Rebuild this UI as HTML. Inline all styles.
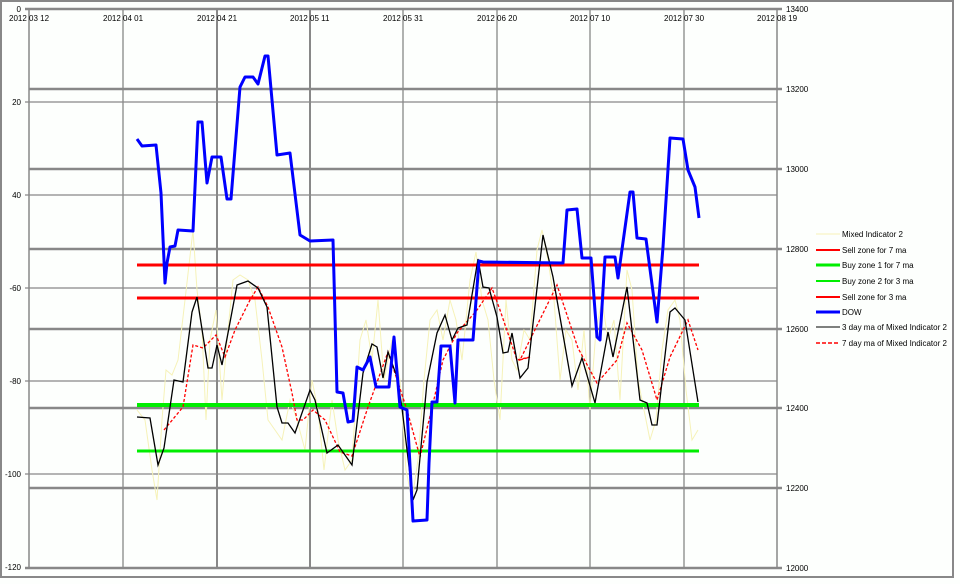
<!DOCTYPE html>
<html><head><meta charset="utf-8"><style>
html,body{margin:0;padding:0;background:#fff;}
svg{display:block;font-family:"Liberation Sans",sans-serif;}
</style></head><body>
<svg width="960" height="584" viewBox="0 0 960 584" xmlns="http://www.w3.org/2000/svg">
<rect x="0" y="0" width="960" height="584" fill="#fdfffd"/>
<rect x="1" y="1" width="952" height="576" fill="none" stroke="#888" stroke-width="2"/>
<!-- thin horizontal grid -->
<g stroke="#888" stroke-width="1.3">
<line x1="25" y1="102" x2="777" y2="102"/>
<line x1="25" y1="195" x2="777" y2="195"/>
<line x1="25" y1="288" x2="777" y2="288"/>
<line x1="25" y1="381" x2="777" y2="381"/>
<line x1="25" y1="474" x2="777" y2="474"/>
</g>
<!-- thick horizontal grid -->
<g stroke="#888" stroke-width="2.5">
<line x1="25" y1="9" x2="782" y2="9"/>
<line x1="29" y1="89" x2="782" y2="89"/>
<line x1="29" y1="169" x2="782" y2="169"/>
<line x1="29" y1="249" x2="782" y2="249"/>
<line x1="29" y1="329" x2="782" y2="329"/>
<line x1="29" y1="408" x2="782" y2="408"/>
<line x1="29" y1="488" x2="782" y2="488"/>
<line x1="25" y1="568" x2="782" y2="568"/>
</g>
<!-- vertical grid -->
<g stroke="#888">
<line x1="29" y1="9" x2="29" y2="568" stroke-width="1.5"/>
<line x1="123" y1="9" x2="123" y2="568" stroke-width="1.3"/>
<line x1="217" y1="9" x2="217" y2="568" stroke-width="2"/>
<line x1="310" y1="9" x2="310" y2="568" stroke-width="2"/>
<line x1="403" y1="9" x2="403" y2="568" stroke-width="1.3"/>
<line x1="497" y1="9" x2="497" y2="568" stroke-width="1.3"/>
<line x1="590" y1="9" x2="590" y2="568" stroke-width="1.3"/>
<line x1="684" y1="9" x2="684" y2="568" stroke-width="1.3"/>
<line x1="777" y1="9" x2="777" y2="568" stroke-width="1.5"/>
</g>
<!-- date labels -->
<g font-size="8" fill="#000">
<text x="9" y="21">2012 03 12</text>
<text x="103" y="21">2012 04 01</text>
<text x="197" y="21">2012 04 21</text>
<text x="290" y="21">2012 05 11</text>
<text x="383" y="21">2012 05 31</text>
<text x="477" y="21">2012 06 20</text>
<text x="570" y="21">2012 07 10</text>
<text x="664" y="21">2012 07 30</text>
<text x="757" y="21">2012 08 19</text>
</g>
<!-- left labels -->
<g font-size="8" fill="#000" text-anchor="end">
<text x="21" y="12">0</text>
<text x="21" y="105">20</text>
<text x="21" y="198">40</text>
<text x="21" y="291">-60</text>
<text x="21" y="384">-80</text>
<text x="21" y="477">-100</text>
<text x="21" y="570">-120</text>
</g>
<!-- right labels -->
<g font-size="8" fill="#000">
<text x="786" y="12">13400</text>
<text x="786" y="92">13200</text>
<text x="786" y="172">13000</text>
<text x="786" y="252">12800</text>
<text x="786" y="332">12600</text>
<text x="786" y="411">12400</text>
<text x="786" y="491">12200</text>
<text x="786" y="571">12000</text>
</g>
<!-- mixed indicator faint -->
<polyline fill="none" stroke="#f6f2b8" stroke-width="1" points="137,410 145,420 152,470 157,500 162,420 166,370 172,375 178,360 185,300 193,230 197,290 202,330 206,420 210,340 216,310 222,400 228,330 233,280 240,275 248,280 255,300 262,360 268,420 275,430 282,440 290,400 297,420 305,450 312,380 318,410 324,470 332,400 338,440 345,470 352,460 360,340 366,320 372,360 378,300 384,380 392,340 400,380 406,470 412,500 418,460 424,380 430,320 437,310 443,340 450,300 456,320 462,360 470,280 476,252 482,300 488,320 494,380 500,420 506,300 512,360 517,370 524,330 530,340 537,250 542,230 548,260 554,300 560,380 566,330 572,340 578,390 584,330 590,410 596,330 602,300 608,340 614,320 620,400 627,270 632,290 638,380 644,410 650,440 656,420 662,350 668,310 675,300 680,320 686,390 692,440 698,430"/>
<!-- horizontal zone lines -->
<line x1="137" y1="265" x2="699" y2="265" stroke="#ff0000" stroke-width="3"/>
<line x1="137" y1="298" x2="699" y2="298" stroke="#ff0000" stroke-width="3"/>
<line x1="137" y1="405" x2="699" y2="405" stroke="#00ee00" stroke-width="4"/>
<line x1="137" y1="451" x2="699" y2="451" stroke="#00ee00" stroke-width="3"/>
<!-- red dashed 7 day -->
<polyline fill="none" stroke="#ff0000" stroke-width="1.3" stroke-dasharray="3,2" points="164,430 183,407 193,345 203,348 216,335 225,357 235,330 250,300 258,287 268,307 282,347 292,393 297,420 303,420 313,410 325,420 340,452 352,456 368,407 388,352 407,410 420,457 432,408 443,360 457,333 477,310 492,288 500,310 517,360 530,357 520,360 557,285 578,348 597,383 617,360 627,323 642,350 657,400 670,357 688,320 698,350"/>
<!-- black 3 day -->
<polyline fill="none" stroke="#000" stroke-width="1.3" points="137,417 150,418 158,465 164,448 174,380 183,382 192,312 197,297 208,368 212,368 217,345 222,365 237,285 248,281 258,288 267,307 277,407 282,423 288,423 295,433 310,390 315,400 327,453 338,445 352,465 363,373 372,344 377,347 383,378 388,352 397,377 402,408 413,500 417,490 427,382 437,333 445,315 452,340 458,328 467,325 478,259 483,287 489,288 497,317 503,353 508,352 512,333 520,378 528,368 543,235 553,277 572,386 582,358 595,403 608,332 613,357 627,287 640,400 647,403 652,425 657,425 670,312 675,308 685,320 698,402"/>
<!-- blue DOW -->
<polyline fill="none" stroke="#0000ff" stroke-width="3" stroke-linejoin="round" points="137,139 142,146 156,145 161,193 165,283 167,263 170,247 175,246 178,230 193,231 198,122 202,122 207,183 212,157 221,157 227,199 231,199 240,87 245,77 253,77 258,84 265,56 268,56 277,155 290,153 300,235 310,241 333,240 337,392 343,393 348,422 353,421 357,367 363,370 370,357 376,387 389,387 394,337 400,407 407,410 413,521 427,520 429,463 432,402 437,402 441,346 450,346 455,403 458,340 473,340 479,261 483,262 563,263 567,210 577,209 582,258 591,258 597,337 600,340 605,257 615,257 618,278 630,192 633,192 637,238 646,239 657,322 663,247 670,138 683,139 688,170 695,187 699,218"/>
<!-- legend -->
<g font-size="8" fill="#000">
<line x1="816" y1="234" x2="840" y2="234" stroke="#f6f2b8" stroke-width="1"/>
<text x="842" y="237">Mixed Indicator 2</text>
<line x1="816" y1="250" x2="840" y2="250" stroke="#ff0000" stroke-width="2"/>
<text x="842" y="253">Sell zone for 7 ma</text>
<line x1="816" y1="265" x2="840" y2="265" stroke="#00ee00" stroke-width="3"/>
<text x="842" y="268">Buy zone 1 for 7 ma</text>
<line x1="816" y1="281" x2="840" y2="281" stroke="#00ee00" stroke-width="2"/>
<text x="842" y="284">Buy zone 2 for 3 ma</text>
<line x1="816" y1="297" x2="840" y2="297" stroke="#ff0000" stroke-width="2"/>
<text x="842" y="300">Sell zone for 3 ma</text>
<line x1="816" y1="312" x2="840" y2="312" stroke="#0000ff" stroke-width="3"/>
<text x="842" y="315">DOW</text>
<line x1="816" y1="327" x2="840" y2="327" stroke="#000" stroke-width="1"/>
<text x="842" y="330">3 day ma of Mixed Indicator 2</text>
<line x1="816" y1="343" x2="840" y2="343" stroke="#ff0000" stroke-width="1.5" stroke-dasharray="4,2"/>
<text x="842" y="346">7 day ma of Mixed Indicator 2</text>
</g>
</svg>
</body></html>
